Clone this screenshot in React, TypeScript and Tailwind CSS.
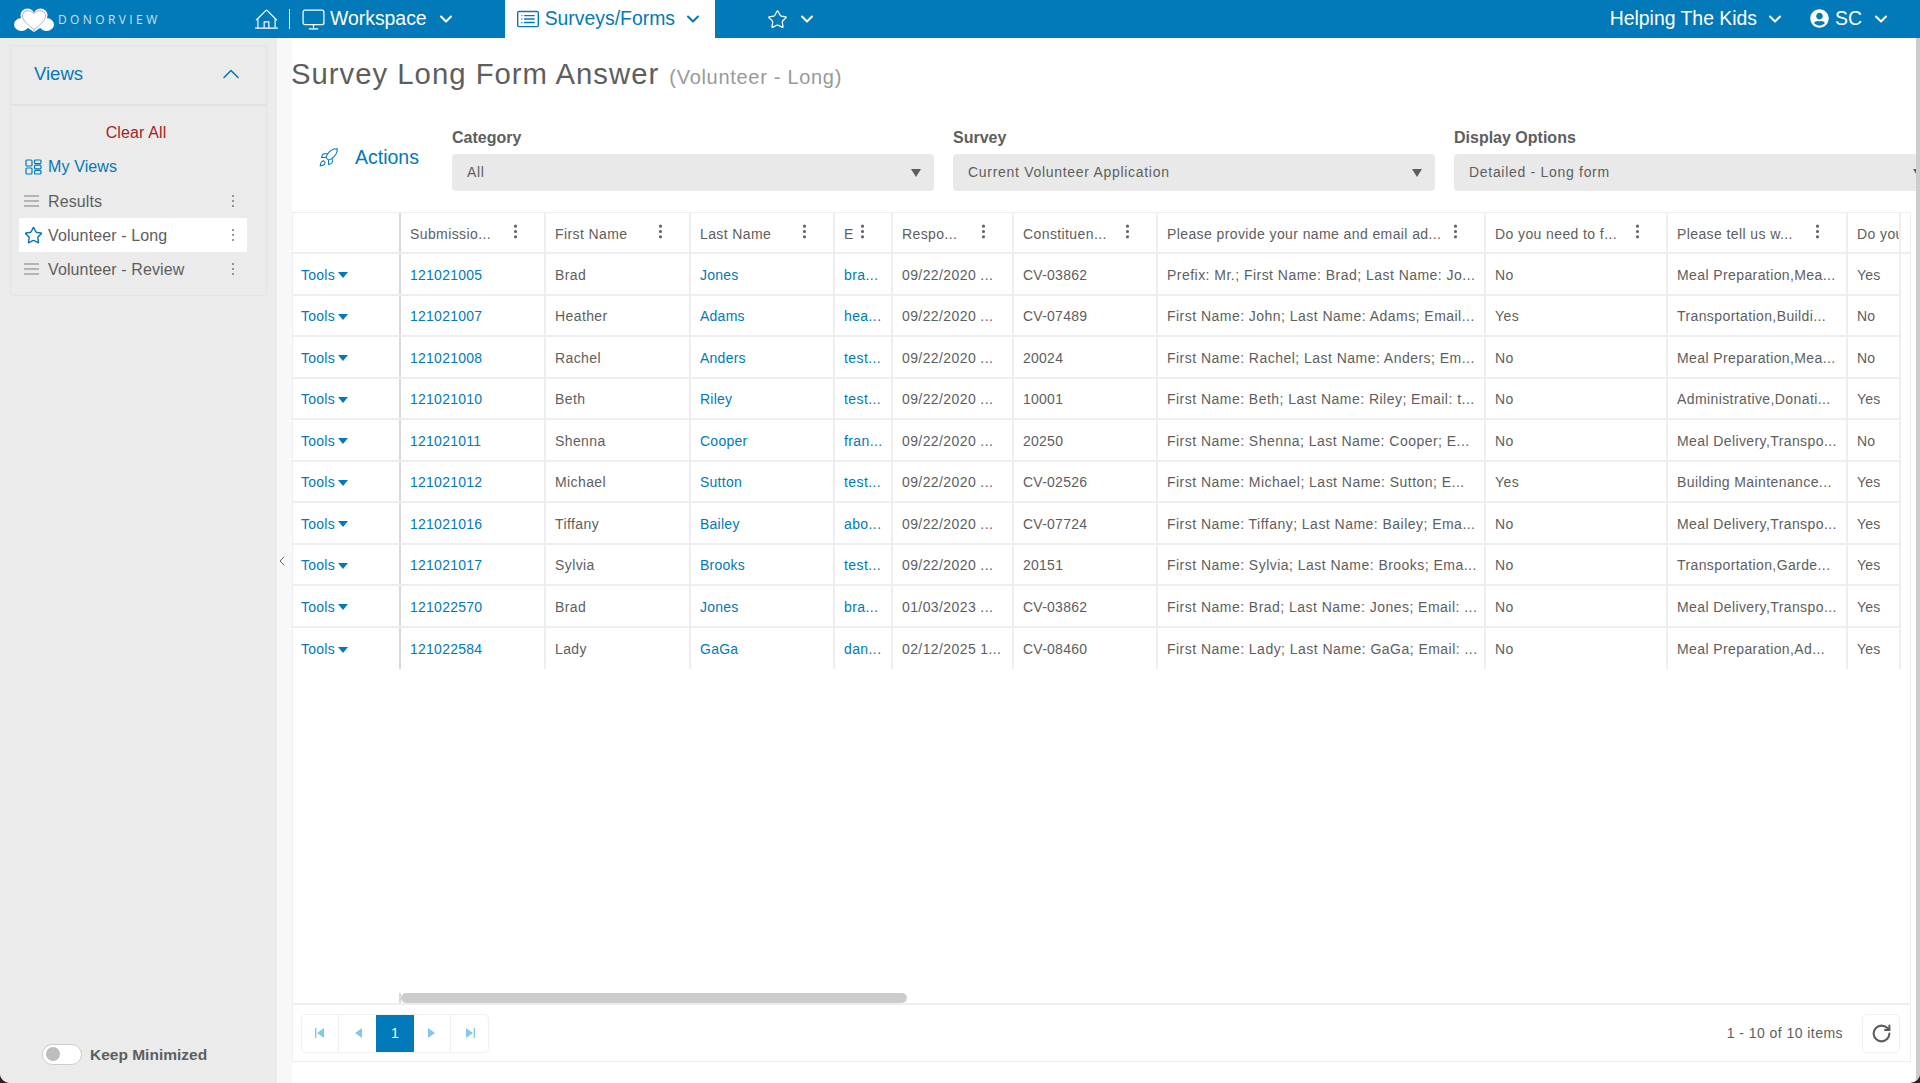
import { ChevronDown, ChevronLeft, ChevronUp, Monitor, Rocket, RotateCw, Star } from "lucide-react";
import { BsCardList, BsThreeDotsVertical } from "react-icons/bs";
import { FaUserCircle } from "react-icons/fa";
import { PiHouseLineLight } from "react-icons/pi";

const rows = [
  ["121021005", "Brad", "Jones", "bra...", "09/22/2020 ...", "CV-03862", "Prefix: Mr.; First Name: Brad; Last Name: Jo...", "No", "Meal Preparation,Mea...", "Yes"],
  ["121021007", "Heather", "Adams", "hea...", "09/22/2020 ...", "CV-07489", "First Name: John; Last Name: Adams; Email...", "Yes", "Transportation,Buildi...", "No"],
  ["121021008", "Rachel", "Anders", "test...", "09/22/2020 ...", "20024", "First Name: Rachel; Last Name: Anders; Em...", "No", "Meal Preparation,Mea...", "No"],
  ["121021010", "Beth", "Riley", "test...", "09/22/2020 ...", "10001", "First Name: Beth; Last Name: Riley; Email: t...", "No", "Administrative,Donati...", "Yes"],
  ["121021011", "Shenna", "Cooper", "fran...", "09/22/2020 ...", "20250", "First Name: Shenna; Last Name: Cooper; E...", "No", "Meal Delivery,Transpo...", "No"],
  ["121021012", "Michael", "Sutton", "test...", "09/22/2020 ...", "CV-02526", "First Name: Michael; Last Name: Sutton; E...", "Yes", "Building Maintenance...", "Yes"],
  ["121021016", "Tiffany", "Bailey", "abo...", "09/22/2020 ...", "CV-07724", "First Name: Tiffany; Last Name: Bailey; Ema...", "No", "Meal Delivery,Transpo...", "Yes"],
  ["121021017", "Sylvia", "Brooks", "test...", "09/22/2020 ...", "20151", "First Name: Sylvia; Last Name: Brooks; Ema...", "No", "Transportation,Garde...", "Yes"],
  ["121022570", "Brad", "Jones", "bra...", "01/03/2023 ...", "CV-03862", "First Name: Brad; Last Name: Jones; Email: ...", "No", "Meal Delivery,Transpo...", "Yes"],
  ["121022584", "Lady", "GaGa", "dan...", "02/12/2025 1...", "CV-08460", "First Name: Lady; Last Name: GaGa; Email: ...", "No", "Meal Preparation,Ad...", "Yes"],
];

const columns = [
  { title: "Submissio...", width: "w-[145px]", link: true, cell: "tracking-[0.25px]" },
  { title: "First Name", width: "w-[145px]", cell: "tracking-[0.4px]" },
  { title: "Last Name", width: "w-[144px]", link: true, cell: "tracking-[0.25px]" },
  { title: "E", width: "w-[58px]", link: true, cell: "tracking-[0.4px]" },
  { title: "Respo...", width: "w-[121px]", cell: "tracking-[0.4px]" },
  { title: "Constituen...", width: "w-[144px]", cell: "tracking-[0.25px]" },
  { title: "Please provide your name and email ad...", width: "w-[328px]", cell: "tracking-[0.47px]" },
  { title: "Do you need to f...", width: "w-[182px]", cell: "tracking-[0.4px]" },
  { title: "Please tell us w...", width: "w-[180px]", cell: "tracking-[0.4px]" },
  { title: "Do you", width: "w-[53px]", last: true, cell: "tracking-[0.25px]" },
];

const Logo = () => (
  <svg width="40" height="24" viewBox="0 0 40 24">
    <g fill="#fff">
      <ellipse cx="7.5" cy="16.5" rx="7.5" ry="6.5" />
      <ellipse cx="32.5" cy="16.5" rx="7.5" ry="6.5" />
      <circle cx="13.5" cy="7.5" r="7" />
      <circle cx="26.5" cy="7.5" r="7" />
      <path d="M8 8h24v8l-12 8L8 16z" />
    </g>
    <path d="M20 5.5C16 1 8.5 2 8.5 8c0 5 7 10 12.5 14.500M20 5.5c4-4.500 11.5-3.500 11.5 2.500 0 5-7 10-12.500 14.500" fill="none" stroke="#a9a3cf" strokeWidth="0.9" />
  </svg>
);

const ViewsIcon = () => (
  <svg width="17" height="16" viewBox="0 0 17 16" fill="none" stroke="#0279b8" strokeWidth="1.2">
    <rect x="1" y="1" width="6" height="6" rx="1" />
    <rect x="1" y="9" width="6" height="6" rx="1" />
    <rect x="9.5" y="1" width="6.5" height="3.6" rx="1" />
    <rect x="9.5" y="6.2" width="6.5" height="3.6" rx="1" />
    <rect x="9.5" y="11.4" width="6.5" height="3.6" rx="1" />
  </svg>
);

const MenuLines = () => (
  <div className="flex w-[15px] flex-col gap-[3px]">
    <div className="h-[2px] bg-[#b4b4b4]" />
    <div className="h-[2px] bg-[#b4b4b4]" />
    <div className="h-[2px] bg-[#b4b4b4]" />
  </div>
);

const Kebab = () => (
  <div className="ml-auto flex flex-col gap-[3px]">
    <div className="h-[2px] w-[2px] rounded-full bg-[#777777]" />
    <div className="h-[2px] w-[2px] rounded-full bg-[#777777]" />
    <div className="h-[2px] w-[2px] rounded-full bg-[#777777]" />
  </div>
);

const PagerIcon = ({ dir, bar }: { dir: "left" | "right"; bar?: boolean }) => (
  <svg width="10" height="10" viewBox="0 0 10 10" fill="#84c7ea">
    {dir === "left" ? <path d="M9 0v10L2 5z" /> : <path d="M1 0v10l7-5z" />}
    {bar && (dir === "left" ? <rect x="0" y="0" width="1.4" height="10" /> : <rect x="8.6" y="0" width="1.4" height="10" />)}
  </svg>
);

const Select = ({ label, value, className }: { label: string; value: string; className: string }) => (
  <div className={className}>
    <div className="mb-[7px] text-[16px] leading-[18px] font-bold text-[#5e5e5e]">{label}</div>
    <div className="flex h-[37px] items-center justify-between rounded-[4px] bg-[#e9e9e9] pr-[13px] pl-[15px] text-[14px] tracking-[0.7px] text-[#5e5e5e]">
      <span>{value}</span>
      <svg width="10" height="8" viewBox="0 0 10 8" fill="#5e5e5e">
        <path d="M0 0h10L5 8z" />
      </svg>
    </div>
  </div>
);

const Header = () => (
  <header className="flex h-[38px] shrink-0 items-center bg-[#0279b8] text-[19.4px] text-white">
    <div className="flex w-[254px] items-center pt-[1px] pl-[14px]">
      <Logo />
      <span className="ml-[4px] font-['Open_Sans',sans-serif] text-[12px] tracking-[3.4px] text-[#c8e3f1]">DONORVIEW</span>
    </div>
    <PiHouseLineLight size={25} />
    <div className="mr-[11px] ml-[10px] h-[20px] w-px bg-white" />
    <Monitor size={25} strokeWidth={1.2} />
    <span className="ml-[4px]">Workspace</span>
    <ChevronDown size={20} strokeWidth={2.5} className="ml-[9px]" />
    <div className="ml-[49px] flex h-full w-[210px] items-center bg-white pl-[12px] text-[#0279b8]">
      <BsCardList size={22} />
      <span className="ml-[6px]">Surveys/Forms</span>
      <ChevronDown size={20} strokeWidth={2.5} className="ml-[8px]" />
    </div>
    <Star size={21} strokeWidth={1.4} className="ml-[52px]" />
    <ChevronDown size={20} strokeWidth={2.5} className="ml-[9px]" />
    <div className="ml-auto flex items-center pr-[29px]">
      <span>Helping The Kids</span>
      <ChevronDown size={20} strokeWidth={2.5} className="ml-[8px]" />
      <FaUserCircle size={19} className="ml-[25px]" />
      <span className="ml-[6px]">SC</span>
      <ChevronDown size={20} strokeWidth={2.5} className="ml-[9px]" />
    </div>
  </header>
);

const Sidebar = () => (
  <aside className="flex w-[277px] shrink-0 flex-col bg-[#ebebeb] px-[10px] pt-[7px]">
    <div className="rounded-[3px] border border-[#e4e4e4]">
      <div className="flex h-[60px] items-center justify-between border-b-2 border-[#e2e2e2] pr-[21px] pb-[2px] pl-[23px] text-[18.5px] text-[#0279b8]">
        <span>Views</span>
        <ChevronUp size={28} strokeWidth={1.3} />
      </div>
      <div className="pt-[11px] pr-[19px] pb-[9px] pl-[8px] text-[16px] tracking-[0.12px] text-[#5e5e5e]">
        <div className="h-[33px] pt-[5px] pl-[6px] text-center leading-[22px] text-[#a31f1f]">Clear All</div>
        <div className="flex h-[34px] items-center gap-[6px] pl-[6px] text-[#0279b8]">
          <ViewsIcon />
          <span>My Views</span>
        </div>
        <div className="flex h-[34px] items-center pr-[13px] pl-[5px]">
          <MenuLines />
          <span className="ml-[9px] pt-[1px]">Results</span>
          <Kebab />
        </div>
        <div className="flex h-[34px] items-center bg-white pr-[13px] pl-[5px]">
          <Star size={19} strokeWidth={1.8} className="text-[#0279b8]" />
          <span className="ml-[5px] pt-[1px]">Volunteer - Long</span>
          <Kebab />
        </div>
        <div className="flex h-[34px] items-center pr-[13px] pl-[5px]">
          <MenuLines />
          <span className="ml-[9px] pt-[1px]">Volunteer - Review</span>
          <Kebab />
        </div>
      </div>
    </div>
    <div className="mt-auto mb-[17px] flex items-center gap-[8px] pl-[32px]">
      <div className="flex h-[21px] w-[40px] items-center rounded-full border border-[#cccccc] bg-white pl-[3px]">
        <div className="h-[14px] w-[14px] rounded-full bg-[#bdbdbd]" />
      </div>
      <span className="text-[15.5px] font-bold text-[#5e5e5e]">Keep Minimized</span>
    </div>
  </aside>
);

const DataTable = () => (
  <div className="flex min-h-0 flex-1 flex-col border border-[#eeeeee]">
    <div className="flex h-[41px] shrink-0 border-b-2 border-[#eeeeee] text-[14px] tracking-[0.4px] text-[#5e5e5e]">
      <div className="w-[108px] shrink-0 border-r-2 border-[#d9d9d9]" />
      {columns.map((c) => (
        <div
          key={c.title}
          className={`relative flex shrink-0 items-center overflow-hidden border-r-2 border-[#eeeeee] pl-[9px] whitespace-nowrap ${c.width}`}
        >
          <span className="pt-[4px]">{c.title}</span>
          {!c.last && (
            <BsThreeDotsVertical
              size={17}
              className="absolute top-[10px] right-[20px] text-[#666666]"
            />
          )}
        </div>
      ))}
    </div>
    <div className="flex min-h-0 flex-1 flex-col">
      <div className="flex-1">
        {rows.map((r) => (
          <div key={r[0]} className="flex h-[41.5px] w-[1608px] border-b-2 border-[#eeeeee] text-[14px] text-[#5e5e5e] last:border-b-0">
            <div className="flex w-[108px] shrink-0 items-center border-r-2 border-[#d9d9d9] pt-[3px] pl-[8px] tracking-[0.25px] text-[#0279b8]">
              Tools
              <svg width="10" height="6" viewBox="0 0 10 6" fill="#0279b8" className="ml-[3px]">
                <path d="M0 0h10L5 6z" />
              </svg>
            </div>
            {columns.map((c, i) => (
              <div
                key={c.title}
                className={`flex shrink-0 items-center overflow-hidden border-r-2 border-[#eeeeee] pt-[3px] pl-[9px] whitespace-nowrap ${c.cell} ${c.width} ${c.link ? "text-[#0279b8]" : ""} ${c.last ? "border-r-0" : ""}`}
              >
                {r[i]}
              </div>
            ))}
          </div>
        ))}
      </div>
      <div className="flex h-[10px] shrink-0">
        <div className="w-[108px] shrink-0 border-r-2 border-[#d9d9d9]" />
        <div className="h-[10px] w-[506px] rounded-full bg-[#cccccc]" />
      </div>
    </div>
    <div className="flex h-[58px] shrink-0 items-center justify-between border-t-2 border-[#eeeeee] pr-[10px] pl-[8px] text-[14px] tracking-[0.45px] text-[#5e5e5e]">
      <div className="flex h-[39px] items-stretch rounded-[5px] border border-[#f0f0f0]">
        <div className="flex w-[37px] items-center justify-center border-r border-[#f0f0f0]">
          <PagerIcon dir="left" bar />
        </div>
        <div className="flex w-[37px] items-center justify-center">
          <PagerIcon dir="left" />
        </div>
        <div className="flex w-[38px] items-center justify-center bg-[#0279b8] text-white">1</div>
        <div className="flex w-[37px] items-center justify-center border-r border-[#f0f0f0]">
          <PagerIcon dir="right" />
        </div>
        <div className="flex w-[37px] items-center justify-center">
          <PagerIcon dir="right" bar />
        </div>
      </div>
      <div className="flex items-center gap-[19px]">
        <span>1 - 10 of 10 items</span>
        <div className="flex h-[39px] w-[38px] items-center justify-center rounded-[5px] border border-[#f0f0f0]">
          <RotateCw size={21} strokeWidth={2.4} className="text-[#5e5e5e]" />
        </div>
      </div>
    </div>
  </div>
);

const App = () => {
  return (
    <div className="h-[1083px] w-[1920px] overflow-hidden bg-[#2a2226] font-['Liberation_Sans',Arial,sans-serif]">
      <div className="flex h-full flex-col overflow-hidden rounded-b-[10px] bg-white">
        <Header />
        <div className="flex min-h-0 flex-1">
          <Sidebar />
          <div className="flex w-[15px] shrink-0 items-center bg-[#f8f8f8]">
            <ChevronLeft size={16} strokeWidth={1.5} className="-ml-[3px] text-[#666666]" />
          </div>
          <main className="flex min-w-0 flex-1 flex-col pb-[21px]">
            <h1 className="mt-[18px] -ml-[1px] h-[36px] text-[29.3px] leading-[36px] tracking-[1px] whitespace-nowrap text-[#5e5e5e]">
              Survey Long Form Answer{" "}
              <span className="ml-[1px] text-[20px] tracking-[0.7px] text-[#999999]">(Volunteer - Long)</span>
            </h1>
            <div className="mt-[20px] flex h-[100px] shrink-0 overflow-hidden">
              <div className="flex w-[160px] shrink-0 items-center pt-[16px] pb-[25px] pl-[26px] text-[19.5px] text-[#0279b8]">
                <Rocket size={21} strokeWidth={1.2} />
                <span className="ml-[16px]">Actions</span>
              </div>
              <div className="flex gap-[19px] pt-[17px]">
                <Select label="Category" value="All" className="w-[482px] shrink-0" />
                <Select label="Survey" value="Current Volunteer Application" className="w-[482px] shrink-0" />
                <Select label="Display Options" value="Detailed - Long form" className="w-[482px] shrink-0" />
              </div>
            </div>
            <div className="mr-[5px] flex min-h-0 flex-1 flex-col">
              <DataTable />
            </div>
          </main>
          <div className="w-[4px] shrink-0 bg-[#cccccc]" />
        </div>
      </div>
    </div>
  );
};

export default App;
